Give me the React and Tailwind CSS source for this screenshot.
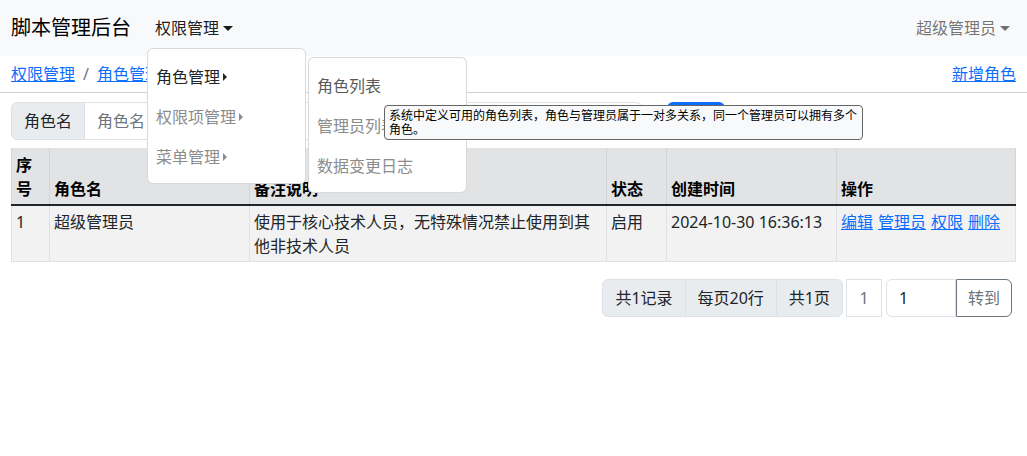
import React from 'react'

function Caret({ className = '' }) {
  return (
    <span
      className={`inline-block w-0 h-0 border-t-[5px] border-x-[5px] border-x-transparent align-middle ml-[4px] ${className}`}
    />
  )
}

function RightCaret({ className = '' }) {
  return (
    <span
      className={`inline-block w-0 h-0 border-l-[4px] border-y-[4px] border-y-transparent align-middle ml-[3px] ${className}`}
    />
  )
}

const cols = [
  { w: 'w-[38px]', label: '序号' },
  { w: 'w-[200px]', label: '角色名' },
  { w: 'w-[357px]', label: '备注说明' },
  { w: 'w-[60px]', label: '状态' },
  { w: 'w-[170px]', label: '创建时间' },
  { w: '', label: '操作' },
]

export default function App() {
  return (
    <div className="relative w-full min-h-[456px] bg-white text-[#212529] text-base leading-6 font-['Noto_Sans','Noto_Sans_CJK_SC',sans-serif]">
      {/* navbar */}
      <nav className="h-14 bg-[#f8f9fa] flex items-center pl-[11px] pr-[17px]">
        <span className="text-xl leading-[30px] text-black">脚本管理后台</span>
        <span className="ml-4 px-2 text-black/90 flex items-center">
          权限管理
          <Caret className="border-t-black/90" />
        </span>
        <span className="ml-auto text-black/55 flex items-center">
          超级管理员
          <Caret className="border-t-black/55" />
        </span>
      </nav>

      {/* breadcrumb */}
      <div className="h-[37px] flex items-center justify-between px-[11px] border-b border-[#cfcfcf]">
        <div className="flex items-center">
          <a className="text-[#0d6efd] underline">权限管理</a>
          <span className="mx-2 text-[#6c757d]">/</span>
          <a className="text-[#0d6efd] underline">角色管理</a>
        </div>
        <a className="text-[#0d6efd] underline">新增角色</a>
      </div>

      <div className="px-[11px] pt-[9px]">
        {/* search */}
        <div className="flex items-center">
          <div className="flex h-[38px] w-[631px]">
            <span className="flex items-center px-3 bg-[#e9ecef] border border-[#dee2e6] rounded-l-md">角色名</span>
            <input
              className="flex-1 px-3 border border-l-0 border-[#dee2e6] rounded-r-md outline-none placeholder:text-[#6c757d]"
              placeholder="角色名"
            />
          </div>
          <button className="ml-[25px] h-[38px] w-[58px] bg-[#0d6efd] text-white rounded-md">查询</button>
        </div>

        {/* table */}
        <table className="mt-2 w-full table-fixed border-collapse border border-[#dee2e6]">
          <thead>
            <tr className="bg-[#e2e3e5] border-b-2 border-[#212529]">
              {cols.map((c) => (
                <th key={c.label} className={`${c.w} px-1 pt-1 pb-[3px] text-left align-bottom font-bold border-x border-[#d3d4d6] text-black`}>
                  {c.label}
                </th>
              ))}
            </tr>
          </thead>
          <tbody>
            <tr className="bg-[#f2f2f2]">
              <td className="px-1 pt-1 pb-[3px] align-top border-x border-[#dee2e6]">1</td>
              <td className="px-1 pt-1 pb-[3px] align-top border-x border-[#dee2e6]">超级管理员</td>
              <td className="px-1 pt-1 pb-[3px] align-top border-x border-[#dee2e6]">使用于核心技术人员，无特殊情况禁止使用到其他非技术人员</td>
              <td className="px-1 pt-1 pb-[3px] align-top border-x border-[#dee2e6]">启用</td>
              <td className="px-1 pt-1 pb-[3px] align-top border-x border-[#dee2e6]">2024-10-30 16:36:13</td>
              <td className="px-1 pt-1 pb-[3px] align-top border-x border-[#dee2e6]">
                <div className="flex gap-[5px] text-[#0d6efd]">
                  <a className="underline">编辑</a>
                  <a className="underline">管理员</a>
                  <a className="underline">权限</a>
                  <a className="underline">删除</a>
                </div>
              </td>
            </tr>
          </tbody>
        </table>

        {/* pagination */}
        <div className="mt-[17px] flex justify-end pr-1">
          <div className="flex h-[38px] border border-[#dee2e6] rounded-md bg-[#e9ecef]">
            <span className="flex items-center px-3">共1记录</span>
            <span className="flex items-center px-3 border-l border-[#dee2e6]">每页20行</span>
            <span className="flex items-center px-3 border-l border-[#dee2e6]">共1页</span>
          </div>
          <span className="ml-[3px] w-9 h-[38px] flex items-center justify-center border border-[#dee2e6] text-[#6c757d]">1</span>
          <div className="ml-1 flex h-[38px]">
            <input
              className="w-[70px] px-3 border border-[#dee2e6] rounded-l-md outline-none"
              defaultValue="1"
            />
            <button className="w-[56px] border border-[#6c757d] rounded-r-md text-[#6c757d]">转到</button>
          </div>
        </div>
      </div>

      {/* dropdown level 1 */}
      <div className="absolute left-[147px] top-[48px] w-[159px] h-[136px] bg-white border border-black/15 rounded-md py-2">
        <div className="px-2 py-2 text-[#212529] flex items-center">
          角色管理
          <RightCaret className="border-l-[#212529]" />
        </div>
        <div className="px-2 py-2 text-[#8c8c8c] flex items-center">
          权限项管理
          <RightCaret className="border-l-[#8c8c8c]" />
        </div>
        <div className="px-2 py-2 text-[#8c8c8c] flex items-center">
          菜单管理
          <RightCaret className="border-l-[#8c8c8c]" />
        </div>
      </div>

      {/* dropdown level 2 */}
      <div className="absolute left-[308px] top-[57px] w-[159px] h-[136px] bg-white border border-black/15 rounded-md py-2">
        <div className="px-2 py-2 text-[#5a5a5a]">角色列表</div>
        <div className="px-2 py-2 text-[#8c8c8c]">管理员列表</div>
        <div className="px-2 py-2 text-[#8c8c8c]">数据变更日志</div>
      </div>

      {/* tooltip */}
      <div className="absolute left-[384px] top-[105px] w-[479px] h-[35px] bg-[#f8f9fa] border border-[#666] rounded-[4px] px-1 pt-[3px] text-[12px] leading-[14px] text-black whitespace-nowrap">
        系统中定义可用的角色列表，角色与管理员属于一对多关系，同一个管理员可以拥有多个
        <br />
        角色。
      </div>
    </div>
  )
}
